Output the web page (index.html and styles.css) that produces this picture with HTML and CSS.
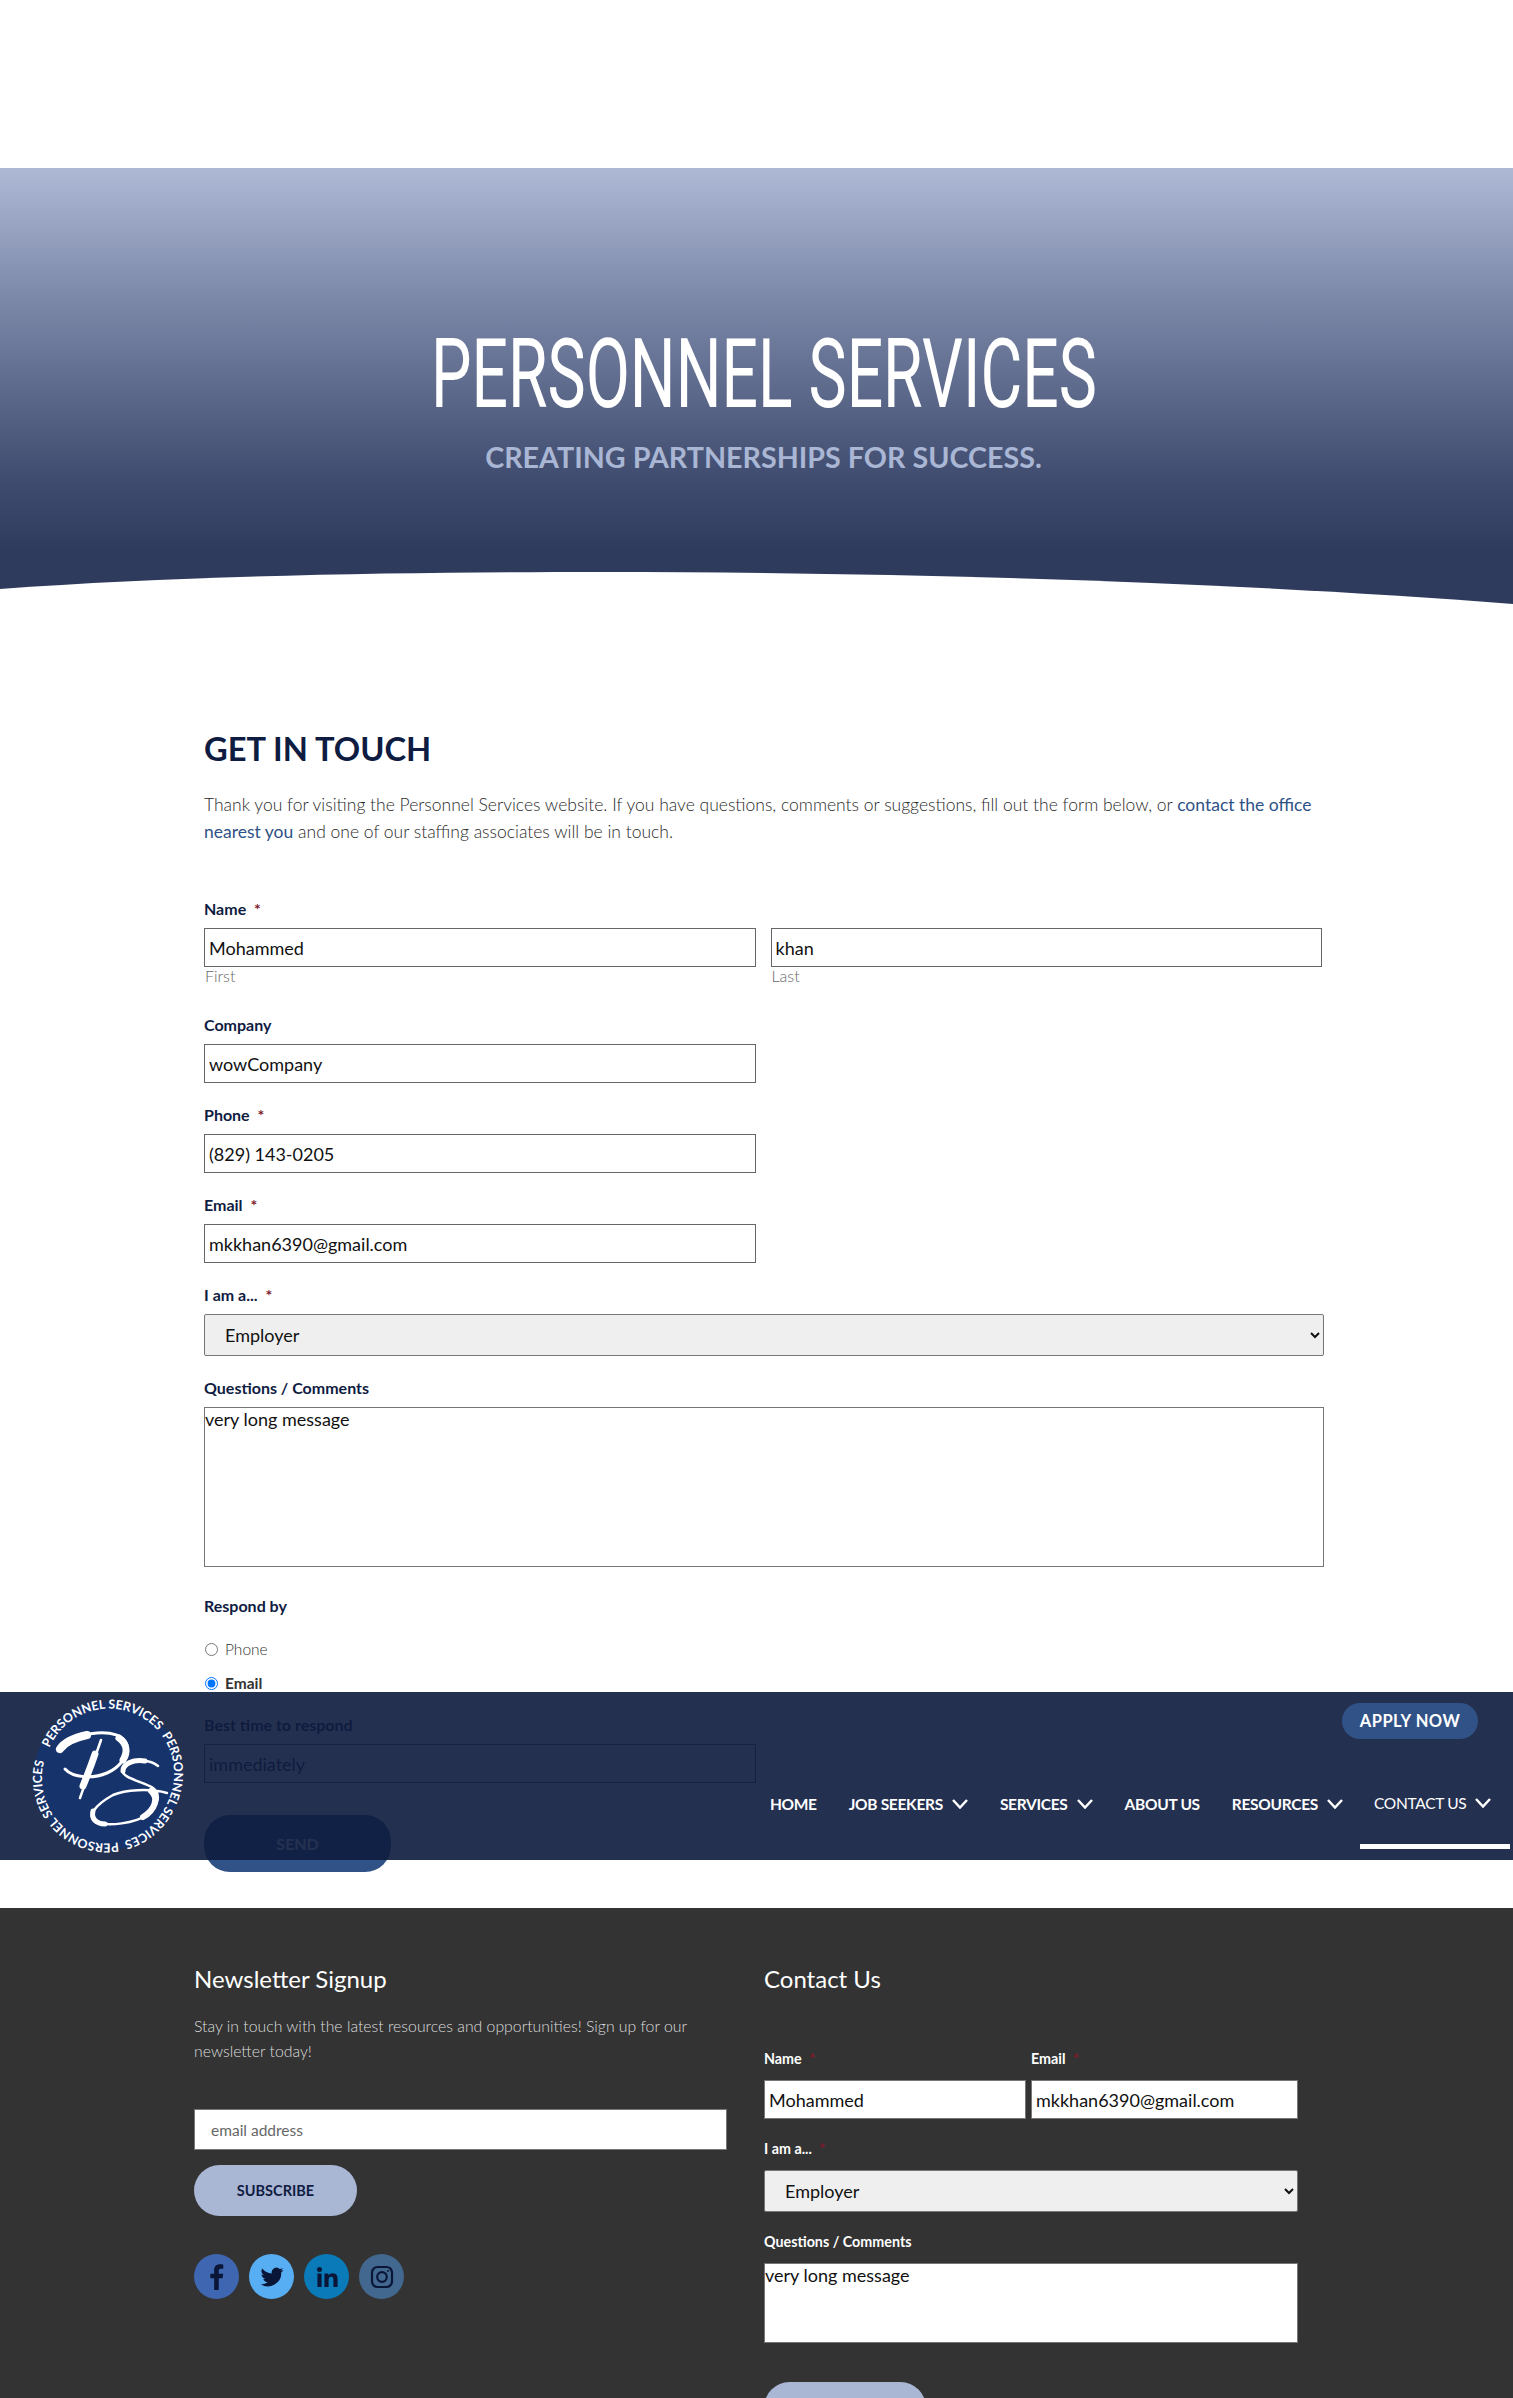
FILE: index.html
```html
<!DOCTYPE html>
<html lang="en">
<head>
  <meta charset="UTF-8">
  <meta name="viewport" content="width=device-width, initial-scale=1.0">
  <title>Contact Us - Personnel Services</title>
  <link rel="stylesheet" href="styles.css">
</head>
<body>
  <section class="hero">
    <h1>PERSONNEL SERVICES</h1>
    <p class="tagline">CREATING PARTNERSHIPS FOR SUCCESS.</p>
    <svg class="hero-curve" viewBox="0 0 1513 33" preserveAspectRatio="none">
      <path d="M0 17 C190 3 420 0 600 0 C900 0 1230 10 1513 32 L1513 33 L0 33 Z" fill="#fff"/>
    </svg>
  </section>

  <main class="contact">
    <h2>GET IN TOUCH</h2>
    <p class="intro">Thank you for visiting the Personnel Services website. If you have questions, comments or suggestions, fill out the form below, or <a href="#">contact the office nearest you</a> and one of our staffing associates will be in touch.</p>

    <form class="contact-form">
      <div class="field">
        <label>Name <span class="req">*</span></label>
        <div class="name-row">
          <div class="name-col">
            <input class="text" type="text" value="Mohammed">
            <small>First</small>
          </div>
          <div class="name-col">
            <input class="text" type="text" value="khan">
            <small>Last</small>
          </div>
        </div>
      </div>
      <div class="field">
        <label>Company</label>
        <input class="text half" type="text" value="wowCompany">
      </div>
      <div class="field">
        <label>Phone <span class="req">*</span></label>
        <input class="text half" type="text" value="(829) 143-0205">
      </div>
      <div class="field">
        <label>Email <span class="req">*</span></label>
        <input class="text half" type="text" value="mkkhan6390@gmail.com">
      </div>
      <div class="field">
        <label>I am a... <span class="req">*</span></label>
        <select class="pick"><option>Employer</option></select>
      </div>
      <div class="field">
        <label>Questions / Comments</label>
        <textarea class="area">very long message</textarea>
      </div>
      <div class="field respond">
        <label>Respond by</label>
        <div class="radio"><input type="radio" name="respond"><span>Phone</span></div>
        <div class="radio checked"><input type="radio" name="respond" checked><span>Email</span></div>
      </div>
      <div class="field best">
        <label>Best time to respond</label>
        <input class="text half" type="text" value="immediately">
      </div>
      <button class="send" type="button">SEND</button>
    </form>
  </main>

  <header class="site-header">
    <svg class="logo" viewBox="0 0 150 150">
      <defs>
        <path id="ring" d="M16.400 46 A65 65 0 1 1 133.600 102 A65 65 0 1 1 16.400 46"/>
      </defs>
      <circle cx="75" cy="74" r="74" fill="#17336b"/>
      <text class="ring" textLength="404" lengthAdjust="spacingAndGlyphs"><textPath href="#ring">PERSONNEL SERVICES  PERSONNEL SERVICES  PERSONNEL SERVICES</textPath></text>
      <g fill="none" stroke="#fff" stroke-linecap="round">
        <path d="M32 67 C40 76 60 77 74 71 C88 65 96 52 94 43 C91 33 78 30 64 31 C48 32 30 39 25 49" stroke-width="3"/>
        <path d="M27 47 C31 41 40 36 54 33" stroke-width="8"/>
        <path d="M86 36 C94 42 95 50 90 58" stroke-width="7"/>
        <path d="M68 38 C62 56 54 76 47 96" stroke-width="2.500"/>
        <path d="M62 52 C58 64 54 74 50 84" stroke-width="7"/>
        <path d="M125 64 C116 56 96 58 90 67 C86 76 112 80 120 86 C128 92 126 104 114 113 C102 121 76 125 62 120 C54 114 62 103 80 93 C92 88 116 86 134 91" stroke-width="2.500"/>
        <path d="M118 89 C126 96 122 108 110 115" stroke-width="6"/>
        <path d="M72 122 C63 122 58 116 60 109" stroke-width="5"/>
        <path d="M112 59 C100 57 90 62 90 69" stroke-width="5"/>
      </g>
    </svg>
    <div class="header-right">
      <a class="apply" href="#">APPLY NOW</a>
      <nav class="main-nav">
        <a href="#">HOME</a>
        <a href="#">JOB SEEKERS <svg class="chev" viewBox="0 0 16 10"><path d="M1 1 L8 8.500 L15 1"/></svg></a>
        <a href="#">SERVICES <svg class="chev" viewBox="0 0 16 10"><path d="M1 1 L8 8.500 L15 1"/></svg></a>
        <a href="#">ABOUT US</a>
        <a href="#">RESOURCES <svg class="chev" viewBox="0 0 16 10"><path d="M1 1 L8 8.500 L15 1"/></svg></a>
        <a class="current" href="#">CONTACT US <svg class="chev" viewBox="0 0 16 10"><path d="M1 1 L8 8.500 L15 1"/></svg></a>
      </nav>
    </div>
  </header>

  <footer class="site-footer">
    <div class="foot-col news">
      <h3>Newsletter Signup</h3>
      <p>Stay in touch with the latest resources and opportunities! Sign up for our newsletter today!</p>
      <input class="email" type="text" placeholder="email address">
      <button class="subscribe" type="button">SUBSCRIBE</button>
      <div class="social">
        <a class="fb" href="#"><svg viewBox="0 0 24 24"><path d="M14 24V13.500h3.400l.6-4H14V7c0-1.200.5-2 2.100-2H18V1.400C17.500 1.300 16.300 1.200 15 1.200c-3 0-5.100 1.800-5.100 5.200v3.100H6.500v4h3.400V24z"/></svg></a>
        <a class="tw" href="#"><svg viewBox="0 0 24 24"><path d="M23.500 4.900c-.8.4-1.700.6-2.700.7 1-.6 1.700-1.500 2-2.600-.9.500-1.900.9-3 1.100a4.700 4.700 0 0 0-8 4.300C7.900 8.200 4.500 6.400 2.200 3.500a4.700 4.700 0 0 0 1.500 6.300c-.8 0-1.500-.2-2.100-.6 0 2.300 1.600 4.200 3.800 4.700-.7.200-1.400.2-2.100.1.600 1.900 2.300 3.200 4.400 3.300A9.500 9.500 0 0 1 .7 19.200 13.400 13.400 0 0 0 21.300 7.300c1-.6 1.700-1.400 2.200-2.400z"/></svg></a>
        <a class="li" href="#"><svg viewBox="0 0 24 24"><circle cx="4.500" cy="4.500" r="2.500"/><path d="M2.400 8.500h4.200V22H2.400zM9.400 8.500h4v1.900c.6-1.100 2-2.200 4.100-2.200 4.300 0 5.100 2.800 5.100 6.500V22h-4.200v-6.600c0-1.600 0-3.600-2.200-3.600s-2.600 1.700-2.600 3.500V22H9.400z"/></svg></a>
        <a class="ig" href="#"><svg viewBox="0 0 24 24" fill="none" stroke="#0a1638" stroke-width="2.200"><rect x="2" y="2" width="20" height="20" rx="5.500"/><circle cx="12" cy="12" r="4.800"/><circle cx="18" cy="6" r="1" fill="#0a1638" stroke="none"/></svg></a>
      </div>
    </div>
    <div class="foot-col reach">
      <h3>Contact Us</h3>
      <div class="foot-row">
        <div class="foot-name">
          <label>Name <span class="req">*</span></label>
          <input class="text" type="text" value="Mohammed">
        </div>
        <div class="foot-mail">
          <label>Email <span class="req">*</span></label>
          <input class="text" type="text" value="mkkhan6390@gmail.com">
        </div>
      </div>
      <div class="foot-field">
        <label>I am a... <span class="req">*</span></label>
        <select class="pick"><option>Employer</option></select>
      </div>
      <div class="foot-field">
        <label>Questions / Comments</label>
        <textarea class="area">very long message</textarea>
      </div>
      <button class="foot-send" type="button">SEND</button>
    </div>
  </footer>
</body>
</html>
```

FILE: styles.css
```css
*{
  margin: 0;
  padding: 0;
  box-sizing: border-box;
}
html, body{
  height: 2398px;
  overflow: hidden;
}
body{
  background-color: #fff;
  font-family: 'Lato', 'Liberation Sans', sans-serif;
  color: #0f1c42;
  padding-top: 168px;
  position: relative;
}

/* hero */
.hero{
  height: 437px;
  position: relative;
  text-align: center;
  padding-top: 156px;
  padding-left: 14px;
  background: linear-gradient(#adb9d5 0%, #7c88a8 30%, #3f4b6e 72%, #2f3b5d 88%, #2f3b5d 100%);
}
/* no Oswald here, so Roboto squeezed to the same width */
.hero h1{
  display: inline-block;
  font-family: 'Roboto', 'Liberation Sans', sans-serif;
  font-weight: 400;
  font-size: 97px;
  line-height: 100px;
  color: #fff;
  white-space: nowrap;
  transform: scaleX(.662);
}
.tagline{
  margin-top: 15px;
  font-size: 28.700px;
  line-height: 36px;
  font-weight: 700;
  color: #a9b6d4;
}
.hero-curve{
  position: absolute;
  left: 0;
  bottom: 0;
  width: 100%;
  height: 33px;
  display: block;
}

/* form */
.contact{
  padding: 124px 0 0 204px;
  width: 1330px;
  height: 1303px;
}
.contact h2{
  font-size: 32.700px;
  line-height: 40px;
  font-weight: 700;
  color: #0f1c42;
}
.intro{
  margin-top: 22px;
  width: 1120px;
  font-size: 17.500px;
  line-height: 27px;
  font-weight: 300;
  color: #2a2a2a;
}
.intro a{
  color: #2e5286;
  font-weight: 400;
  text-decoration: none;
}
.contact-form{
  margin-top: 54px;
}
.field{
  margin-bottom: 22px;
}
.field label, .foot-name label, .foot-mail label, .foot-field label{
  display: block;
  font-size: 16px;
  line-height: 20px;
  font-weight: 700;
  margin-bottom: 9px;
}
.req{
  color: #7d1a2a;
  margin-left: 4px;
}
.text{
  display: block;
  height: 39px;
  padding: 0 4px;
  border: 1px solid #666;
  background: transparent;
  font-family: inherit;
  font-size: 18px;
  color: #111;
}
.half{
  width: 552px;
}
.name-row{
  display: flex;
  gap: 15px;
  width: 1118px;
}
.name-col{
  flex: 1;
}
.name-col .text{
  width: 100%;
}
.name-col small{
  display: block;
  font-size: 16px;
  line-height: 18px;
  font-weight: 300;
  color: #666;
  padding-left: 1px;
  margin-bottom: 8px;
}
.pick{
  display: block;
  width: 1120px;
  height: 42px;
  padding-left: 16px;
  border: 1px solid #767676;
  border-radius: 2px;
  background-color: #efefef;
  font-family: inherit;
  font-size: 18px;
  color: #111;
}
.area{
  display: block;
  width: 1120px;
  height: 160px;
  border: 1px solid #767676;
  font-family: inherit;
  font-size: 18px;
  line-height: 22px;
  color: #111;
  resize: none;
}
.respond{
  padding-top: 7px;
  margin-bottom: 0;
}
.field.respond label{
  margin-bottom: 23px;
}
.radio{
  display: flex;
  align-items: center;
  gap: 7px;
  height: 20px;
  margin-bottom: 14px;
  font-size: 15.500px;
  font-weight: 300;
  color: #333;
}
.radio input{
  width: 13px;
  height: 13px;
  margin-left: 1px;
}
.radio.checked{
  font-weight: 700;
}
.best{
  padding-top: 8px;
  margin-bottom: 32px;
}
.best .text{
  color: #0f1c42;
}
.send{
  display: block;
  width: 187px;
  height: 57px;
  border: 0;
  border-radius: 26px;
  background-color: #305286;
  color: #fff;
  font-family: inherit;
  font-size: 16px;
  font-weight: 700;
}

/* header stuck over the page */
.site-header{
  position: absolute;
  left: 0;
  top: 1692px;
  width: 100%;
  height: 168px;
  background-color: rgba(14, 27, 63, 0.91);
  display: flex;
  justify-content: space-between;
  z-index: 5;
}
.logo{
  width: 150px;
  height: 150px;
  margin: 10px 0 0 33px;
  overflow: visible;
}
.ring{
  font-size: 12.500px;
  font-weight: 700;
  fill: #fff;
  white-space: pre;
}
.header-right{
  display: flex;
  flex-direction: column;
  align-items: flex-end;
}
.apply{
  margin: 11px 35px 0 0;
  width: 136px;
  height: 36px;
  line-height: 36px;
  text-align: center;
  border-radius: 18px;
  background-color: #305286;
  color: #fff;
  font-size: 16.500px;
  font-weight: 700;
  letter-spacing: .5px;
  text-decoration: none;
}
.main-nav{
  display: flex;
  margin-top: 48px;
  padding-right: 3px;
}
.main-nav a{
  display: flex;
  align-items: flex-start;
  gap: 9px;
  height: 62px;
  padding: 7px 0 0 0;
  margin-left: 32px;
  color: #fff;
  font-size: 15.500px;
  line-height: 20px;
  font-weight: 700;
  letter-spacing: -.3px;
  text-decoration: none;
  white-space: nowrap;
}
.main-nav a.current{
  width: 150px;
  margin-left: 17px;
  padding: 6px 0 0 14px;
  font-weight: 400;
  border-bottom: 5px solid #fff;
}
.chev{
  width: 16px;
  height: 10px;
  margin-top: 5px;
  fill: none;
  stroke: #fff;
  stroke-width: 2.500;
}

/* footer */
.site-footer{
  height: 490px;
  padding: 0 0 0 194px;
  background-color: #333;
  display: flex;
  color: #fff;
  overflow: hidden;
}
.foot-col h3{
  font-size: 24px;
  line-height: 30px;
  font-weight: 400;
  color: #fff;
}
.news{
  width: 570px;
  padding-top: 56px;
}
.news p{
  margin-top: 19px;
  width: 530px;
  font-size: 15.800px;
  line-height: 25px;
  font-weight: 300;
  color: #ddd;
}
.email{
  display: block;
  margin-top: 46px;
  width: 533px;
  height: 41px;
  padding-left: 16px;
  border: 1px solid #777;
  background-color: #fff;
  font-family: inherit;
  font-size: 15.500px;
}
.email::placeholder{
  color: #666;
}
.subscribe{
  display: block;
  margin-top: 15px;
  width: 163px;
  height: 51px;
  border: 0;
  border-radius: 26px;
  background-color: #a9b6d4;
  color: #0f1c42;
  font-family: inherit;
  font-size: 14.500px;
  font-weight: 700;
}
.social{
  display: flex;
  gap: 10px;
  margin-top: 38px;
}
.social a{
  width: 45px;
  height: 45px;
  border-radius: 50%;
  display: flex;
  align-items: center;
  justify-content: center;
}
.social svg{
  width: 24px;
  height: 24px;
  fill: #0a1638;
}
.social .fb svg{
  width: 27px;
  height: 27px;
}
.social .ig svg{
  fill: none;
}
.fb{ background-color: #3f67b1; }
.tw{ background-color: #58aef2; }
.li{ background-color: #0a7ab8; }
.ig{ background-color: #42688f; }
.reach{
  width: 534px;
  padding-top: 56px;
}
.foot-row{
  display: flex;
  gap: 5px;
  margin-top: 55px;
}
.foot-name{
  width: 262px;
}
.foot-mail{
  width: 267px;
}
.foot-row label, .foot-field label{
  font-size: 14.300px;
  color: #fff;
}
.foot-name label, .foot-mail label, .foot-field label{
  margin-bottom: 11px;
}
.foot-row .text, .foot-field .text{
  width: 100%;
  background-color: #fff;
  border-color: #777;
}
.foot-field{
  margin-top: 20px;
}
.foot-field .pick, .foot-field .area{
  width: 534px;
}
.foot-field .area{
  height: 80px;
}
.foot-send{
  display: block;
  margin-top: 39px;
  width: 162px;
  height: 51px;
  border: 0;
  border-radius: 26px;
  background-color: #a9b6d4;
  color: #0f1c42;
  font-family: inherit;
  font-size: 14.500px;
  font-weight: 700;
}
```
